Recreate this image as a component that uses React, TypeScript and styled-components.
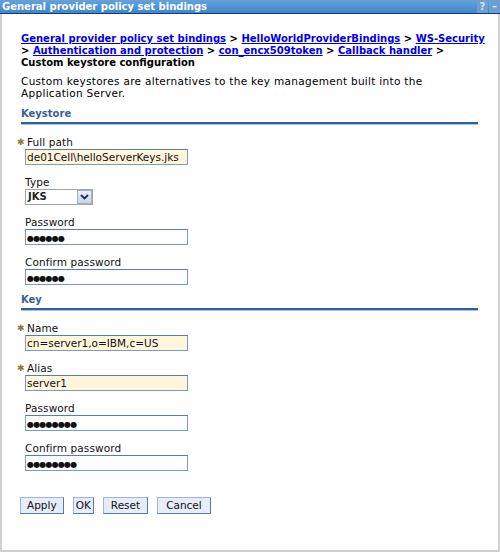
import React from 'react';
import styled, { createGlobalStyle } from 'styled-components';

const GlobalStyle = createGlobalStyle`
  html, body {
    margin: 0;
    padding: 0;
    background: #ffffff;
  }
  body {
    font-family: "DejaVu Sans", Verdana, sans-serif;
    font-size: 10px;
    color: #000;
  }
`;

const Panel = styled.div`
  width: 500px;
  height: 552px;
  box-sizing: border-box;
  border-left: 2px solid #d0d0d0;
  border-right: 2px solid #cfcfcf;
  border-bottom: 2px solid #cfcfcf;
  display: flex;
  flex-direction: column;
  background: #fff;
`;

const TitleBar = styled.div`
  height: 13px;
  margin-left: -2px;
  margin-right: -2px;
  display: flex;
  align-items: center;
  justify-content: space-between;
  background: linear-gradient(#64a2dc, #3f86cc);
  border-bottom: 1px solid #1d3a66;
  color: #fff;
  font-weight: bold;
  font-size: 10px;
  padding-left: 2px;
`;

const TitleText = styled.span`
  line-height: 13px;
`;

const TitleIcons = styled.div`
  display: flex;
  height: 13px;
  gap: 1px;
`;

const TitleIcon = styled.span`
  width: 11px;
  height: 13px;
  display: flex;
  align-items: center;
  justify-content: center;
  background: #6d9fd2;
  color: #dbe8f6;
  font-size: 10px;
  line-height: 13px;
`;

const Content = styled.div`
  padding: 19px 20px 0 17px;
  display: flex;
  flex-direction: column;
`;

const Crumbs = styled.div`
  font-weight: bold;
  line-height: 12px;
  padding-left: 2px;
  white-space: nowrap;
`;

const Crumb = styled.a`
  color: #0000ee;
  text-decoration: underline;
  cursor: pointer;
`;

const Description = styled.p`
  margin: 6px 0 0 2px;
  line-height: 12px;
  font-size: 10.5px;
  letter-spacing: 0.3px;
  white-space: nowrap;
`;

const SectionHead = styled.div`
  margin: 9px 0 0 2px;
  color: #3d5d93;
  font-weight: bold;
  line-height: 12px;
  padding-bottom: 2px;
  border-bottom: 2px solid #2e60a0;
  box-shadow: 0 1px 0 #a7c3e6;
`;

const Field = styled.div<{ $first?: boolean }>`
  display: flex;
  flex-direction: column;
  margin-top: ${(p) => (p.$first ? '12px' : '11px')};
  padding-left: 6px;
`;

const Label = styled.label`
  display: flex;
  align-items: center;
  line-height: 12px;
  font-size: 10.5px;
  letter-spacing: 0.1px;
  color: #111;
  margin-bottom: 1px;
`;

const Star = styled.span`
  width: 10px;
  margin-left: -8px;
  color: #8a7a2a;
  font-size: 9px;
`;

const TextBox = styled.div<{ $required?: boolean }>`
  width: 163px;
  height: 16px;
  box-sizing: border-box;
  border: 1px solid #7d9ac0;
  border-top-color: #5d7ba5;
  background: ${(p) => (p.$required ? '#fff6de' : '#ffffff')};
  padding: 0 1px;
  font-size: 10.5px;
  line-height: 14px;
  white-space: nowrap;
  overflow: hidden;
  color: #111;
`;

const Dots = styled.span`
  font-size: 8px;
  letter-spacing: -0.8px;
  line-height: 14px;
`;

const Select = styled.div`
  width: 68px;
  height: 16px;
  box-sizing: border-box;
  border: 1px solid #a5a5a5;
  display: flex;
  align-items: stretch;
  background: #fff;
`;

const SelectValue = styled.span`
  flex: 1;
  padding-left: 2px;
  line-height: 14px;
  font-size: 10px;
  font-weight: bold;
  color: #222;
`;

const SelectArrow = styled.span`
  width: 15px;
  box-sizing: border-box;
  border: 1px solid #9bb0cc;
  background: linear-gradient(#e9eff8, #c9d6e8);
  display: flex;
  align-items: center;
  justify-content: center;
`;

const ButtonRow = styled.div`
  display: flex;
  gap: 9px;
  margin-top: 26px;
  padding-left: 1px;
`;

const Button = styled.button<{ $pad: number }>`
  height: 17px;
  padding: 0 ${(p) => p.$pad}px;
  font-family: "DejaVu Sans", Verdana, sans-serif;
  font-size: 10.5px;
  line-height: 13px;
  color: #111;
  background: #e6edf8;
  border: 1px solid #9fb5d3;
  border-right-color: #5a7aa5;
  border-bottom-color: #5a7aa5;
  cursor: pointer;
`;

type FieldProps = {
  label: string;
  required?: boolean;
  first?: boolean;
  children: React.ReactNode;
};

function FormField({ label, required, first, children }: FieldProps) {
  return (
    <Field $first={first}>
      <Label>
        {required && <Star>✱</Star>}
        {label}
      </Label>
      {children}
    </Field>
  );
}

function Password({ count }: { count: number }) {
  return (
    <TextBox>
      <Dots>{'●'.repeat(count)}</Dots>
    </TextBox>
  );
}

export default function App() {
  return (
    <>
      <GlobalStyle />
      <Panel>
        <TitleBar>
          <TitleText>General provider policy set bindings</TitleText>
          <TitleIcons>
            <TitleIcon>?</TitleIcon>
            <TitleIcon>–</TitleIcon>
          </TitleIcons>
        </TitleBar>
        <Content>
          <Crumbs>
            <Crumb>General provider policy set bindings</Crumb> &gt;{' '}
            <Crumb>HelloWorldProviderBindings</Crumb> &gt; <Crumb>WS-Security</Crumb>
            <br />
            &gt; <Crumb>Authentication and protection</Crumb> &gt;{' '}
            <Crumb>con_encx509token</Crumb> &gt; <Crumb>Callback handler</Crumb> &gt;
            <br />
            <span>Custom keystore configuration</span>
          </Crumbs>
          <Description>
            Custom keystores are alternatives to the key management built into the
            <br />
            Application Server.
          </Description>

          <SectionHead>Keystore</SectionHead>
          <FormField label="Full path" required first>
            <TextBox $required>de01Cell\helloServerKeys.jks</TextBox>
          </FormField>
          <FormField label="Type">
            <Select>
              <SelectValue>JKS</SelectValue>
              <SelectArrow>
                <svg width="9" height="6" viewBox="0 0 9 6">
                  <path d="M1 1 L4.5 4.5 L8 1" stroke="#1d2d4a" strokeWidth="1.8" fill="none" />
                </svg>
              </SelectArrow>
            </Select>
          </FormField>
          <FormField label="Password">
            <Password count={6} />
          </FormField>
          <FormField label="Confirm password">
            <Password count={6} />
          </FormField>

          <SectionHead>Key</SectionHead>
          <FormField label="Name" required first>
            <TextBox $required>cn=server1,o=IBM,c=US</TextBox>
          </FormField>
          <FormField label="Alias" required>
            <TextBox $required>server1</TextBox>
          </FormField>
          <FormField label="Password">
            <Password count={8} />
          </FormField>
          <FormField label="Confirm password">
            <Password count={8} />
          </FormField>

          <ButtonRow>
            <Button $pad={6}>Apply</Button>
            <Button $pad={2}>OK</Button>
            <Button $pad={7}>Reset</Button>
            <Button $pad={8}>Cancel</Button>
          </ButtonRow>
        </Content>
      </Panel>
    </>
  );
}
